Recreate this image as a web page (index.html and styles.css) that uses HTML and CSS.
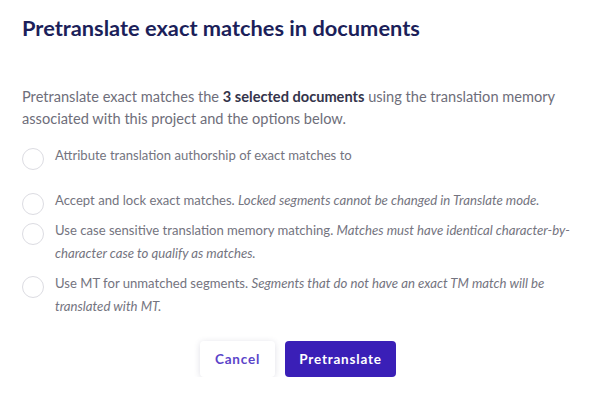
FILE: index.html
```html
<!DOCTYPE html>
<html>
<head>
<meta charset="utf-8">
<link rel="stylesheet" href="styles.css">
</head>
<body>
<div class="dialog">
  <h1 class="title">Pretranslate exact matches in documents</h1>
  <p class="intro">Pretranslate exact matches the <strong>3 selected documents</strong> using the translation memory associated with this project and the options below.</p>
  <div class="options">
    <label class="option option-first">
      <span class="radio"></span>
      <span class="text">Attribute translation authorship of exact matches to</span>
    </label>
    <label class="option">
      <span class="radio"></span>
      <span class="text">Accept and lock exact matches. <em>Locked segments cannot be changed in Translate mode.</em></span>
    </label>
    <label class="option">
      <span class="radio"></span>
      <span class="text">Use case sensitive translation memory matching. <em>Matches must have identical character-by-character case to qualify as matches.</em></span>
    </label>
    <label class="option">
      <span class="radio"></span>
      <span class="text">Use MT for unmatched segments. <em>Segments that do not have an exact TM match will be translated with MT.</em></span>
    </label>
  </div>
  <div class="actions">
    <button class="btn btn-cancel">Cancel</button>
    <button class="btn btn-primary">Pretranslate</button>
  </div>
</div>
</body>
</html>
```
FILE: styles.css
```css
html, body {
  margin: 0;
  padding: 0;
  background: #ffffff;
}
body {
  font-family: Lato, "Noto Sans", sans-serif;
  color: #6e6e7a;
}
.dialog {
  padding: 13px 16px 0 22px;
}
.title {
  margin: 0;
  font-size: 21.8px;
  line-height: 30px;
  font-weight: 700;
  color: #1c1f5a;
}
.intro {
  margin: 43px 4px 0 0;
  font-size: 14.6px;
  line-height: 22px;
  color: #6e6e7a;
}
.intro strong {
  color: #34344a;
  font-weight: 700;
}
.options {
  display: flex;
  flex-direction: column;
  gap: 7px;
  margin-top: 14px;
}
.option {
  display: flex;
  align-items: flex-start;
  gap: 11px;
  font-size: 13.1px;
  line-height: 23px;
  color: #747480;
}
.option-first {
  margin-bottom: 15px;
}
.radio {
  flex: none;
  box-sizing: border-box;
  width: 22px;
  height: 22px;
  border: 1px solid #dcdce2;
  border-radius: 50%;
  margin-top: 4px;
  margin-bottom: -4px;
  background: #fff;
}
.text em {
  font-style: italic;
  font-size: 13.2px;
}
.actions {
  display: flex;
  justify-content: center;
  gap: 10px;
  margin-top: 23px;
  padding-left: 1px;
}
.btn {
  height: 36px;
  border-radius: 4px;
  border: none;
  font-family: Lato, "Noto Sans", sans-serif;
  font-size: 13.5px;
  font-weight: 700;
  letter-spacing: 0.8px;
  padding: 0;
}
.btn-cancel {
  background: #ffffff;
  color: #5b44c9;
  width: 75px;
  box-shadow: 0 1px 6px rgba(40, 40, 90, 0.15);
}
.btn-primary {
  background: #3a1fb7;
  color: #ffffff;
  width: 111px;
}
```
